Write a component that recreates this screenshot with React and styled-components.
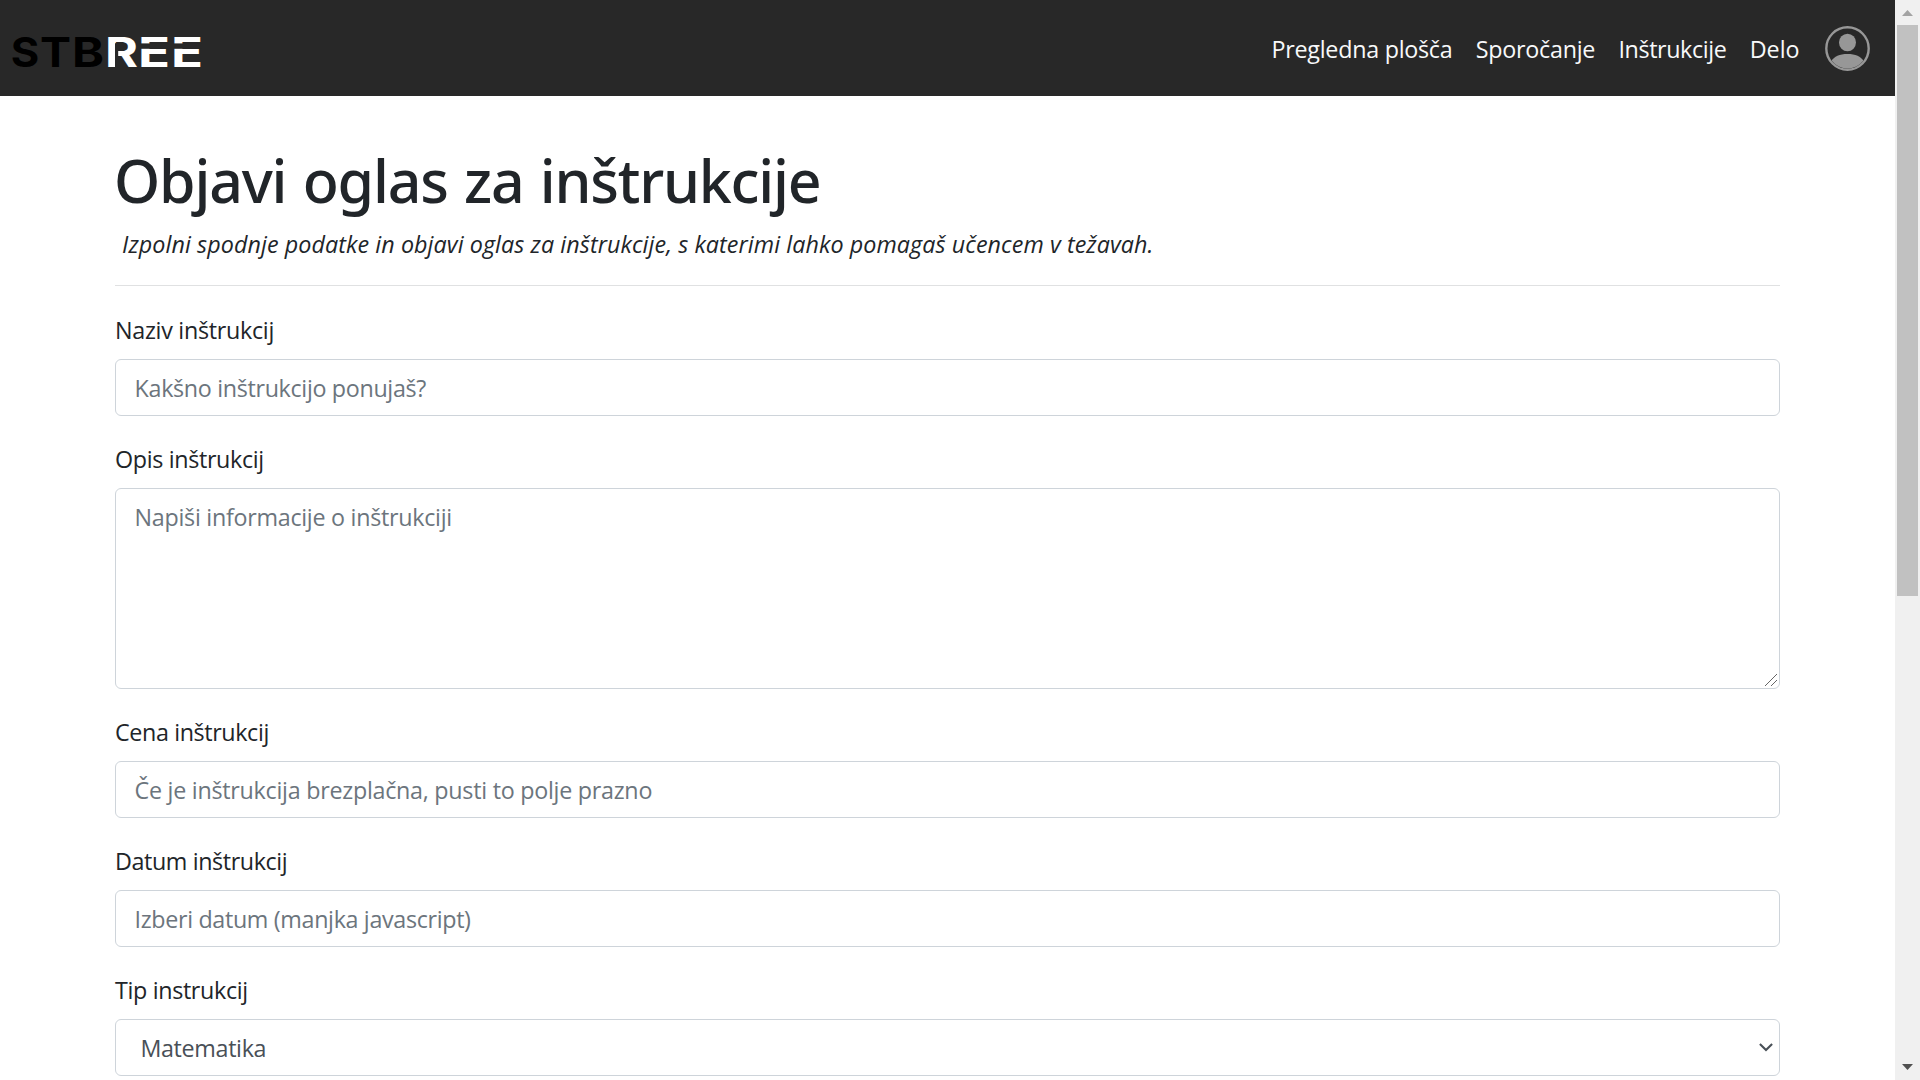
import React from "react";
import styled, { createGlobalStyle } from "styled-components";

const GlobalStyle = createGlobalStyle`
  *, *::before, *::after { box-sizing: border-box; }
  html, body { margin: 0; height: 100%; overflow: hidden; background: #fff; }
  body {
    font-family: "Open Sans", "Noto Sans", sans-serif;
    font-size: 23.3px;
    line-height: 36px;
    color: #212529;
  }
`;

const Window = styled.div`
  display: flex;
  height: 1080px;
  overflow: hidden;
`;

const Page = styled.div`
  flex: 1;
  min-width: 0;
`;

const Navbar = styled.header`
  display: flex;
  align-items: center;
  justify-content: space-between;
  height: 96px;
  padding: 0 25px 0 7px;
  background: #282828;
`;

const LogoSvg = styled.svg`
  display: block;
  width: 200px;
  height: 60px;
  margin-top: 8px;
  font-family: "Inter", sans-serif;
  font-size: 40.6px;
  font-weight: 700;
`;

const Nav = styled.nav`
  display: flex;
  align-items: center;
  gap: 23.4px;
`;

const NavLink = styled.a`
  color: #f8f9fa;
  text-decoration: none;
  white-space: nowrap;
  padding-top: 2px;
  letter-spacing: ${(p) => p.$tracking}px;
`;

const Avatar = styled.svg`
  display: block;
  width: 45px;
  height: 45px;
  margin: 1px 0 0 2px;
`;

const Content = styled.main`
  display: flex;
  flex-direction: column;
  padding: 48px 115px 0;
`;

const Title = styled.h1`
  margin: 0 0 10px -1px;
  font-family: "Noto Sans", "Open Sans", sans-serif;
  font-size: 59px;
  line-height: 72px;
  font-weight: 500;
  letter-spacing: -1.2px;
  word-spacing: 2.2px;
  white-space: nowrap;
`;

const Lead = styled.p`
  margin: 0;
  padding-left: 7px;
  font-style: italic;
  white-space: nowrap;
  letter-spacing: 0.078px;
`;

const Divider = styled.hr`
  width: 100%;
  height: 1px;
  margin: 23px 0 26px;
  border: 0;
  background: #e0e1e2;
`;

const Form = styled.form`
  display: flex;
  flex-direction: column;
  gap: 25px;
`;

const Group = styled.div`
  display: flex;
  flex-direction: column;
  gap: 11px;
`;

const Label = styled.label`
  letter-spacing: ${(p) => p.$tracking}px;
`;

const Control = styled.input`
  display: block;
  width: 100%;
  height: 57px;
  margin: 0;
  padding: 1px 18.6px 0;
  border: 1px solid #ced4da;
  border-radius: 6px;
  outline: none;
  background: #fff;
  color: #495057;
  font: inherit;
  letter-spacing: ${(p) => p.$tracking}px;
  &::placeholder { color: #6c757d; opacity: 1; }
`;

const TextArea = styled(Control)`
  height: 201px;
  padding-top: 10px;
  resize: none;
`;

const Select = styled(Control)`
  appearance: none;
  padding-left: 24.4px;
`;

const ControlWrap = styled.div`
  position: relative;
`;

const Grip = styled.svg`
  position: absolute;
  right: 3px;
  bottom: 3px;
  width: 12px;
  height: 12px;
`;

const Chevron = styled.svg`
  position: absolute;
  right: 7px;
  top: 24px;
  width: 14px;
  height: 10px;
`;

const Scrollbar = styled.aside`
  display: flex;
  flex-direction: column;
  width: 25px;
  padding: 0 2px;
  background: #f0f0f0;
`;

const ScrollButton = styled.svg`
  display: block;
  width: 21px;
  height: 25px;
  fill: ${(p) => p.$color};
`;

const Thumb = styled.div`
  height: 571px;
  margin-bottom: auto;
  background: #c1c1c1;
`;

const LOGO = [
  ["S", -1.2, 28.5, "#000"],
  ["T", 28, 31, "#000"],
  ["B", 60, 32, "#000"],
  ["R", 93, 33, "#fff"],
  ["E", 126, 32, "#fff"],
  ["E", 159, 32, "#fff"],
];

const LINKS = [
  ["Pregledna plošča", -0.26],
  ["Sporočanje", -0.27],
  ["Inštrukcije", -0.4],
  ["Delo", 0],
];

function Logo() {
  return (
    <LogoSvg viewBox="-5 -15 200 60" role="img" aria-label="STBREE">
      {LOGO.map(([letter, x, width, fill], i) => (
        <text key={i} x={x} y="29.5" textLength={width} lengthAdjust="spacingAndGlyphs" fill={fill}>
          {letter}
        </text>
      ))}
      <rect x="103" y="6.2" width="3.2" height="24" fill="#282828" />
      <rect x="128" y="6.4" width="29" height="5.4" fill="#282828" />
      <rect x="161" y="6.4" width="29" height="5.4" fill="#282828" />
    </LogoSvg>
  );
}

function Field({ id, label, labelTracking, tracking, placeholder }) {
  return (
    <Group>
      <Label htmlFor={id} $tracking={labelTracking}>{label}</Label>
      <Control id={id} placeholder={placeholder} $tracking={tracking} />
    </Group>
  );
}

export default function App() {
  return (
    <Window>
      <GlobalStyle />
      <Page>
        <Navbar>
          <Logo />
          <Nav>
            {LINKS.map(([text, tracking]) => (
              <NavLink key={text} $tracking={tracking}>{text}</NavLink>
            ))}
            <Avatar viewBox="0 0 45 45" fill="#979797">
              <circle cx="22.5" cy="22.5" r="21.2" fill="none" stroke="#979797" strokeWidth="2.4" />
              <ellipse cx="22.5" cy="16.5" rx="8.5" ry="8.7" />
              <path d="M6.7 34.8C9 30.5 14.5 28 22.5 28S36 30.5 38.3 34.8A20 20 0 0 1 6.7 34.8Z" />
            </Avatar>
          </Nav>
        </Navbar>
        <Content>
          <Title>Objavi oglas za inštrukcije</Title>
          <Lead>
            Izpolni spodnje podatke in objavi oglas za inštrukcije, s katerimi lahko pomagaš učencem v težavah.
          </Lead>
          <Divider />
          <Form>
            <Field id="naziv" label="Naziv inštrukcij" labelTracking={-0.28} placeholder="Kakšno inštrukcijo ponujaš?" tracking={-0.33} />
            <Group>
              <Label htmlFor="opis" $tracking={-0.34}>Opis inštrukcij</Label>
              <ControlWrap>
                <TextArea as="textarea" id="opis" placeholder="Napiši informacije o inštrukciji" $tracking={-0.28} />
                <Grip viewBox="0 0 12 12" stroke="#666" strokeWidth="1">
                  <path d="M0 12L12 0M6 12L12 6" />
                </Grip>
              </ControlWrap>
            </Group>
            <Field id="cena" label="Cena inštrukcij" labelTracking={-0.38} placeholder="Če je inštrukcija brezplačna, pusti to polje prazno" tracking={-0.265} />
            <Field id="datum" label="Datum inštrukcij" labelTracking={-0.4} placeholder="Izberi datum (manjka javascript)" tracking={-0.34} />
            <Group>
              <Label htmlFor="tip" $tracking={-0.34}>Tip instrukcij</Label>
              <ControlWrap>
                <Select as="select" id="tip" $tracking={-0.34}>
                  <option>Matematika</option>
                </Select>
                <Chevron viewBox="0 0 14 10" fill="none" stroke="#495057" strokeWidth="2.1">
                  <path d="M0.9 1L7 7L13.1 1" />
                </Chevron>
              </ControlWrap>
            </Group>
          </Form>
        </Content>
      </Page>
      <Scrollbar>
        <ScrollButton viewBox="0 0 21 25" $color="#a3a3a3">
          <path d="M5 16L10.5 10L16 16Z" />
        </ScrollButton>
        <Thumb />
        <ScrollButton viewBox="0 0 21 25" $color="#505050">
          <path d="M5 9L10.5 15L16 9Z" />
        </ScrollButton>
      </Scrollbar>
    </Window>
  );
}
